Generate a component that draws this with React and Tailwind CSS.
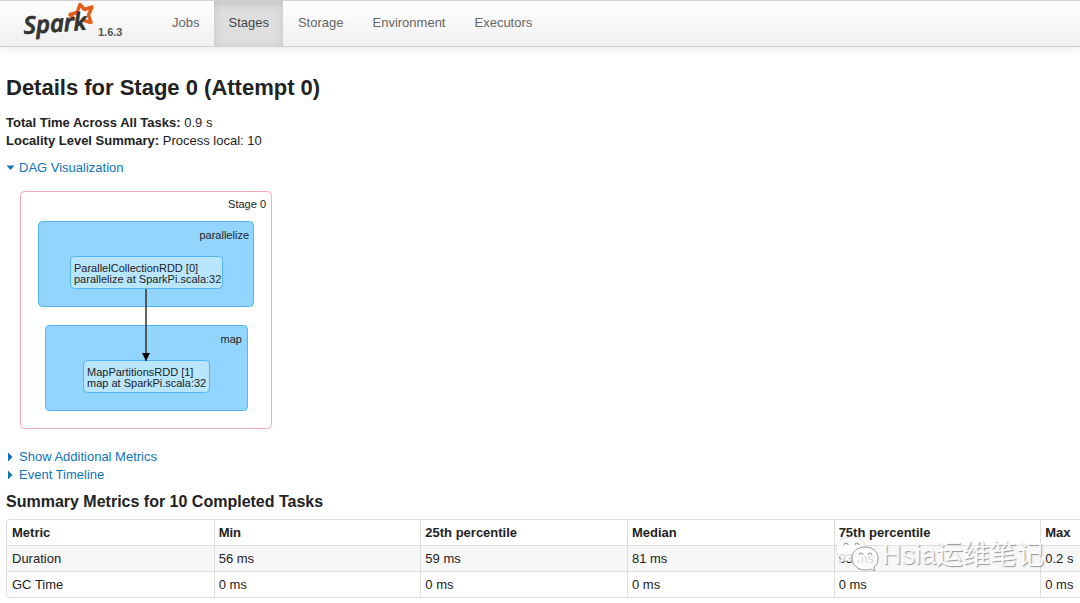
import React from 'react';

const tabs = ['Jobs', 'Stages', 'Storage', 'Environment', 'Executors'];

const columns = ['Metric', 'Min', '25th percentile', 'Median', '75th percentile', 'Max'];

const rows = [
    ['Duration', '56 ms', '59 ms', '81 ms', '93 ms', '0.2 s'],
    ['GC Time', '0 ms', '0 ms', '0 ms', '0 ms', '0 ms'],
];

const SparkLogo = () => (
    <svg width="72" height="40" viewBox="0 0 72 40" role="img" aria-label="Spark">
        <path
            d="M51 18 L47 13.5 L54 11.5 L57 3.5 L61.5 8.5 L69 6 L65.5 14 L68 21.5 L61 19.5"
            fill="none"
            stroke="#e2601c"
            strokeWidth="3.5"
            strokeLinejoin="round"
            strokeLinecap="round"
        />
        <text
            x="1"
            y="33"
            transform="rotate(-4 1 33)"
            className="fill-[#333] stroke-[#333] font-['Open_Sans',sans-serif] text-[24px] font-semibold italic"
            strokeWidth="0.8"
        >
            Spark
        </text>
    </svg>
);

const Navbar = () => (
    <nav className="flex h-[47px] items-stretch gap-px border-y border-[#d0d0d0] bg-linear-to-b from-white to-[#f0f0f0] pl-[23px] shadow-[0_1px_10px_rgba(0,0,0,0.1)]">
        <a href="#" className="flex w-[134px] items-start gap-[3px] text-[#555]">
            <SparkLogo />
            <span className="pt-[23px] text-[11px] leading-4 font-bold">1.6.3</span>
        </a>
        {tabs.map(tab => (
            <a
                key={tab}
                href="#"
                className={
                    tab === 'Stages'
                        ? 'bg-[#dedede] px-3.5 pt-3 text-[13px] leading-5 text-[#444] shadow-[inset_0_3px_8px_rgba(0,0,0,0.125)]'
                        : 'px-3.5 pt-3 text-[13px] leading-5 text-[#666]'
                }
            >
                {tab}
            </a>
        ))}
    </nav>
);

const Toggle = ({ open, children }) => (
    <button type="button" className="flex items-center gap-1 text-[#0f73b8]">
        <svg width="9" height="10" viewBox="0 0 9 10" fill="currentColor">
            <path d={open ? 'M0.5 2.5 H8.5 L4.5 7 Z' : 'M2 0.5 L6.5 5 L2 9.5 Z'} />
        </svg>
        {children}
    </button>
);

const DagGraph = () => (
    <svg width="254" height="240" viewBox="0 0 254 240" className="text-[11px]" fill="#222">
        <defs>
            <marker id="arrow" viewBox="0 0 8 8" refX="8" refY="4" markerWidth="8" markerHeight="8" markerUnits="userSpaceOnUse" orient="auto">
                <path d="M0 0 L8 4 L0 8 Z" fill="#000" />
            </marker>
        </defs>
        <rect x="1.5" y="1.5" width="251" height="237" rx="4" fill="#fff" stroke="#f7a9b8" />
        <text x="247" y="18" textAnchor="end">Stage 0</text>

        <g stroke="#52b4f0">
            <rect x="19.5" y="31.5" width="215" height="85" rx="4" fill="#92d6ff" />
            <rect x="51.5" y="66.5" width="152" height="32" rx="4" fill="#b8e6fe" />
            <rect x="26.5" y="135.5" width="202" height="85" rx="4" fill="#92d6ff" />
            <rect x="64.5" y="170.5" width="126" height="32" rx="4" fill="#b8e6fe" />
        </g>
        <text x="230" y="49" textAnchor="end">parallelize</text>
        <text x="55" y="82">ParallelCollectionRDD [0]</text>
        <text x="55" y="93">parallelize at SparkPi.scala:32</text>
        <text x="223" y="153" textAnchor="end">map</text>
        <text x="68" y="186">MapPartitionsRDD [1]</text>
        <text x="68" y="197">map at SparkPi.scala:32</text>
        <path d="M127 99 V171" stroke="#333" strokeWidth="1.5" markerEnd="url(#arrow)" />
    </svg>
);

const SummaryTable = () => (
    <table className="w-full min-w-[1242px] table-fixed border-separate border-spacing-0 rounded border border-[#ddd] text-left">
        <thead>
            <tr>
                {columns.map(column => (
                    <th key={column} className="border-l border-[#ddd] px-1 pt-1 pb-[3px] font-bold first:border-l-0 first:pl-[5px]">
                        {column}
                    </th>
                ))}
            </tr>
        </thead>
        <tbody>
            {rows.map(row => (
                <tr key={row[0]} className="odd:bg-[#f7f7f7]">
                    {row.map((cell, i) => (
                        <td key={i} className="border-t border-l border-[#ddd] px-1 pt-1 pb-[3px] first:border-l-0 first:pl-[5px]">
                            {cell}
                        </td>
                    ))}
                </tr>
            ))}
        </tbody>
    </table>
);

const Watermark = () => (
    <div className="pointer-events-none absolute right-9 bottom-7 flex items-center gap-[3px]">
        <svg width="44" height="38" viewBox="0 0 44 38" fill="#fff" fillOpacity="0.8" stroke="#999">
            <path d="M16 1 C7 1 1 6 1 13 C1 17 3 20 6 22 L5 27 L10 24 C12 25 14 25 17 25 C25 25 31 20 31 13 C31 6 25 1 16 1 Z" stroke="#ddd" />
            <path d="M30 11 C22 11 17 16 17 22 C17 29 23 34 30 34 C32 34 34 34 36 33 L40 35 L39 31 C42 29 43 26 43 22 C43 16 38 11 30 11 Z" />
            <path
                d="M9 9 a2 2 0 0 1 4 0 M20 9 a2 2 0 0 1 4 0 M24 19 a2 2 0 0 1 4 0 M33 19 a2 2 0 0 1 4 0"
                fill="none"
                stroke="#888"
            />
        </svg>
        <span className="font-['Liberation_Sans','Noto_Sans_CJK_SC',sans-serif] text-[27px] leading-9 text-white/90 [text-shadow:1px_1px_1px_#999]">
            Hsia运维笔记
        </span>
    </div>
);

export default function App() {
    return (
        <div className="relative overflow-hidden bg-white pb-1 font-['Liberation_Sans',Arial,sans-serif] text-[13px] leading-[18px] text-[#222]">
            <Navbar />
            <main className="pl-1.5">
                <h1 className="pt-[25px] text-[22px] leading-8 font-bold">Details for Stage 0 (Attempt 0)</h1>
                <ul className="pt-2.5">
                    <li><strong>Total Time Across All Tasks:</strong> 0.9 s</li>
                    <li><strong>Locality Level Summary:</strong> Process local: 10</li>
                </ul>
                <div className="pt-[9px]">
                    <Toggle open>DAG Visualization</Toggle>
                </div>
                <div className="pt-[13px] pb-[18px] pl-[13px]">
                    <DagGraph />
                </div>
                <Toggle>Show Additional Metrics</Toggle>
                <Toggle>Event Timeline</Toggle>
                <h2 className="pt-2 pb-[7px] text-[16px] leading-5 font-bold">Summary Metrics for 10 Completed Tasks</h2>
                <SummaryTable />
            </main>
            <Watermark />
        </div>
    );
}
